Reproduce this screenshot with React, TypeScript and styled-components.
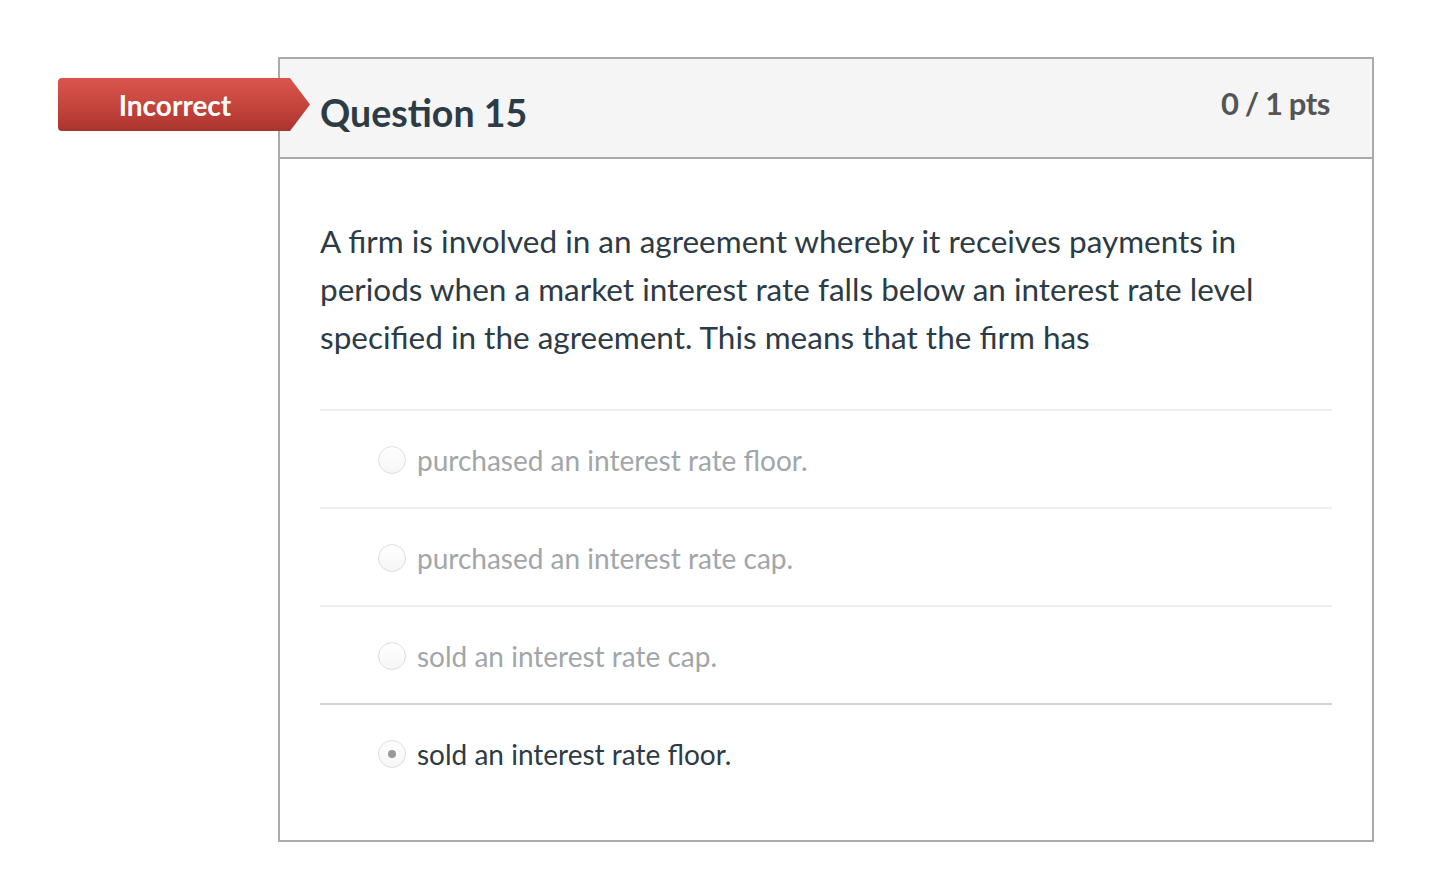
import styled, { createGlobalStyle } from "styled-components";

const GlobalStyle = createGlobalStyle`
    html, body {
        margin: 0;
        padding: 0;
        background: #ffffff;
    }
    body {
        font-family: Lato, "Open Sans", sans-serif;
        color: #2d3b45;
    }
`;

const Page = styled.div`
    padding: 57px 80px 40px 278px;
`;

const Card = styled.div`
    position: relative;
    width: 1092px;
    border: 2px solid #aaaaaa;
    background: #ffffff;
`;

const Badge = styled.div`
    position: absolute;
    left: -222px;
    top: 19px;
    width: 252px;
    height: 53px;
    padding-right: 18px;
    box-sizing: border-box;
    display: flex;
    align-items: center;
    justify-content: center;
    background: linear-gradient(to bottom, #d9554c 0%, #c4443c 55%, #a9342d 100%);
    border-radius: 4px 0 0 4px;
    clip-path: polygon(0 0, calc(100% - 20px) 0, 100% 50%, calc(100% - 20px) 100%, 0 100%);
    color: #ffffff;
    font-size: 28px;
    font-weight: 700;
`;

const Header = styled.div`
    height: 98px;
    display: flex;
    justify-content: space-between;
    align-items: flex-start;
    padding: 0 42px 0 40px;
    background: #f5f5f5;
    border-bottom: 2px solid #aaaaaa;
`;

const Title = styled.h2`
    margin: 31px 0 0;
    font-size: 37.5px;
    font-weight: 700;
    line-height: 1.2;
    color: #2d3b45;
`;

const Points = styled.div`
    margin-top: 26px;
    font-size: 31px;
    font-weight: 700;
    line-height: 1.2;
    letter-spacing: -0.4px;
    word-spacing: -1px;
    color: #555555;
`;

const Body = styled.div`
    padding: 58px 40px 39px 40px;
`;

const Prompt = styled.p`
    margin: 0 0 48px;
    font-size: 31.5px;
    line-height: 48px;
    color: #2d3b45;
`;

const Answer = styled.label<{ $selected?: boolean }>`
    display: flex;
    align-items: center;
    height: 98px;
    padding-top: 2px;
    padding-left: 58px;
    box-sizing: border-box;
    border-top: 2px solid ${(p) => (p.$selected ? "#d4d4d4" : "#eeeeee")};
    font-size: 28px;
    color: ${(p) => (p.$selected ? "#2d3b45" : "#a1a6aa")};
`;

const Radio = styled.span<{ $checked?: boolean }>`
    position: relative;
    width: 26px;
    height: 26px;
    margin-right: 11px;
    border-radius: 50%;
    border: 1px solid #dedede;
    background: linear-gradient(to bottom, #ffffff, #f6f6f6);
    flex-shrink: 0;

    &::after {
        content: "";
        display: ${(p) => (p.$checked ? "block" : "none")};
        position: absolute;
        left: 50%;
        top: 50%;
        width: 8px;
        height: 8px;
        margin: -4px 0 0 -4px;
        border-radius: 50%;
        background: #999999;
    }
`;

const answers = [
    "purchased an interest rate floor.",
    "purchased an interest rate cap.",
    "sold an interest rate cap.",
    "sold an interest rate floor.",
];

const selected = 3;

export default function App() {
    return (
        <>
            <GlobalStyle />
            <Page>
                <Card>
                    <Badge>Incorrect</Badge>
                    <Header>
                        <Title>Question 15</Title>
                        <Points>0 / 1 pts</Points>
                    </Header>
                    <Body>
                        <Prompt>
                            A firm is involved in an agreement whereby it receives payments in periods
                            when a market interest rate falls below an interest rate level specified in
                            the agreement. This means that the firm has
                        </Prompt>
                        {answers.map((a, i) => (
                            <Answer key={a} $selected={i === selected}>
                                <Radio $checked={i === selected} />
                                {a}
                            </Answer>
                        ))}
                    </Body>
                </Card>
            </Page>
        </>
    );
}
